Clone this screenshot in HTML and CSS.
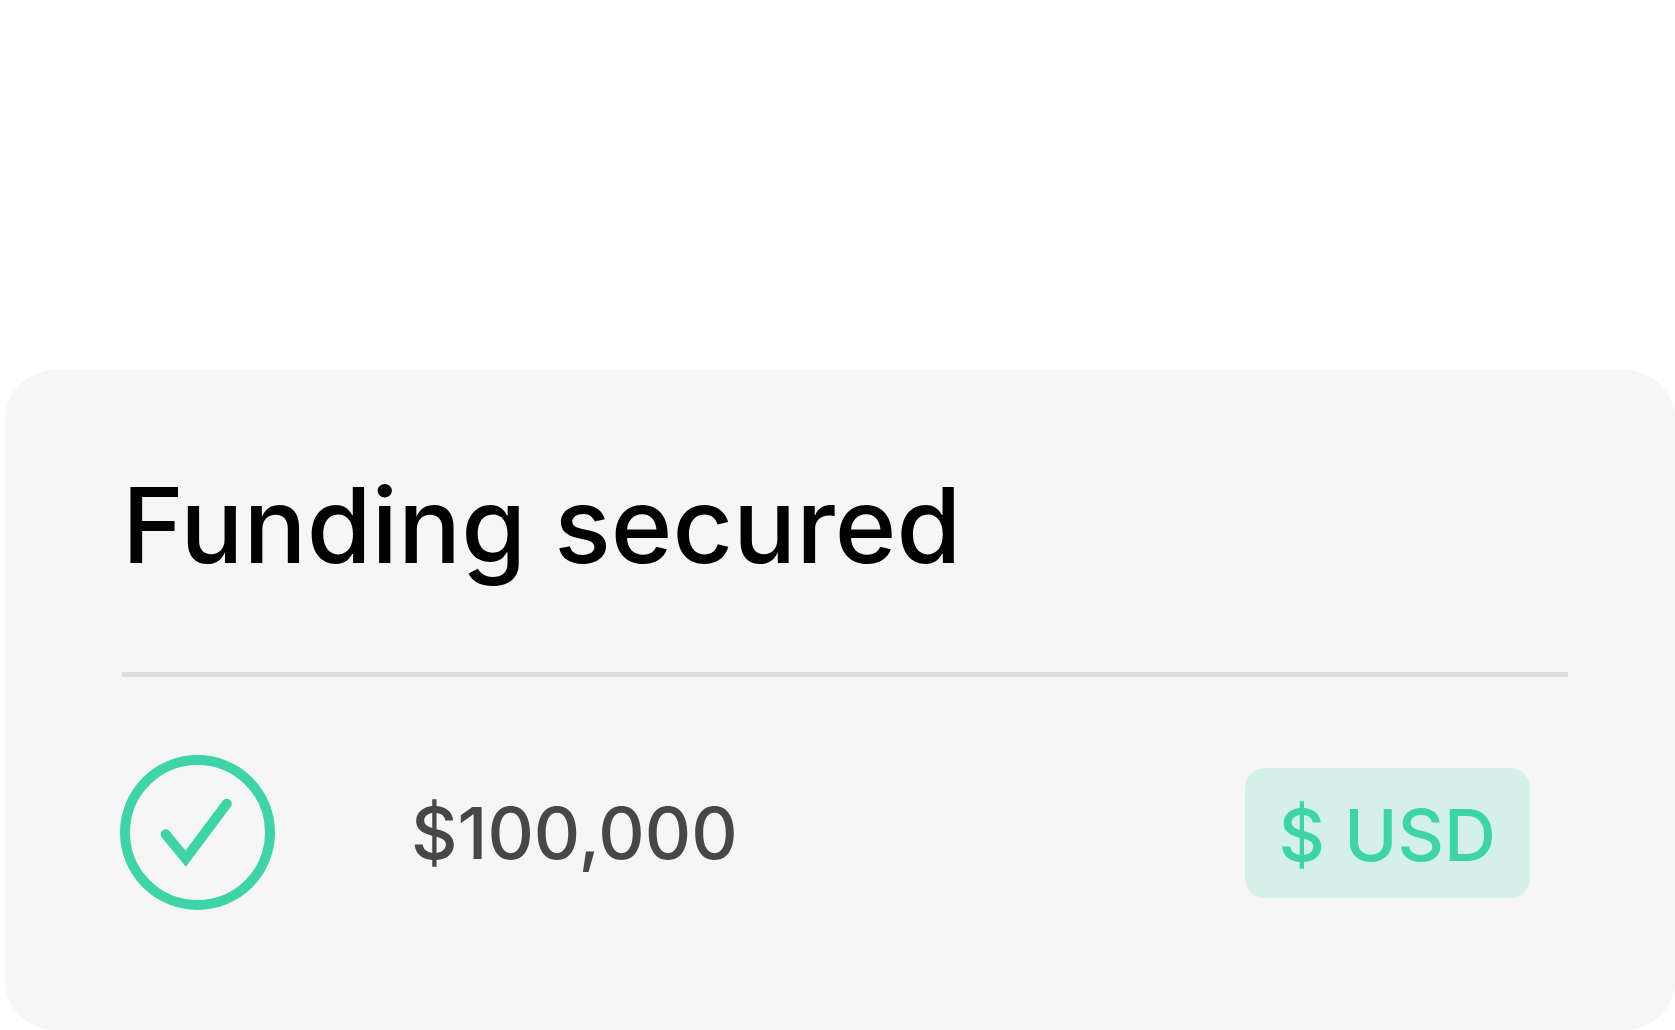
FILE: index.html
```html
<!DOCTYPE html>
<html lang="en">
<head>
    <meta charset="UTF-8">
    <meta name="viewport" content="width=device-width, initial-scale=1.0">
    <title>Funding secured</title>
    <link rel="stylesheet" href="styles.css">
</head>
<body>

    <main class="card">
        <h1 class="card-title">Funding secured</h1>
        <div class="funding-row">
            <svg class="check-icon" viewBox="0 0 155 155" aria-hidden="true">
                <circle cx="77.5" cy="77.5" r="72.5" />
                <path d="M45.7 79.3 L65.7 103.7 L106.7 48.7" />
            </svg>
            <span class="amount">$100,000</span>
            <span class="currency">$ USD</span>
        </div>
    </main>

</body>
</html>
```

FILE: styles.css
```css
* {
    box-sizing: border-box;
}
body {
    margin: 0;
    min-height: 100vh;
    display: flex;
    flex-direction: column;
    justify-content: flex-end;
    padding-left: 5px;
    font-family: Inter, "Liberation Sans", sans-serif;
    font-weight: 500;
    background-color: #fff;
    color: #000;
}
.card {
    padding: 90px 107px 120px 115px;
    border-radius: 50px;
    background-color: #f6f6f6;
}
.card-title {
    margin: 0 0 0 2px;
    padding-bottom: 82px;
    border-bottom: 5px solid #dedede;
    font-size: 105px;
    font-weight: 500;
    line-height: 130px;
}
.funding-row {
    display: flex;
    align-items: center;
    padding: 78px 38px 0 0;
}
.check-icon {
    width: 155px;
    height: 155px;
    fill: none;
    stroke: #3dd5a7;
    stroke-width: 10;
    stroke-linecap: round;
}
.amount {
    margin-left: 136px;
    font-size: 72px;
    color: #474747;
}
.currency {
    margin-left: auto;
    padding: 20px 34px 16px;
    border-radius: 20px;
    font-size: 72px;
    line-height: 94px;
    background-color: #d5f0e8;
    color: #3dd5a7;
}
```
